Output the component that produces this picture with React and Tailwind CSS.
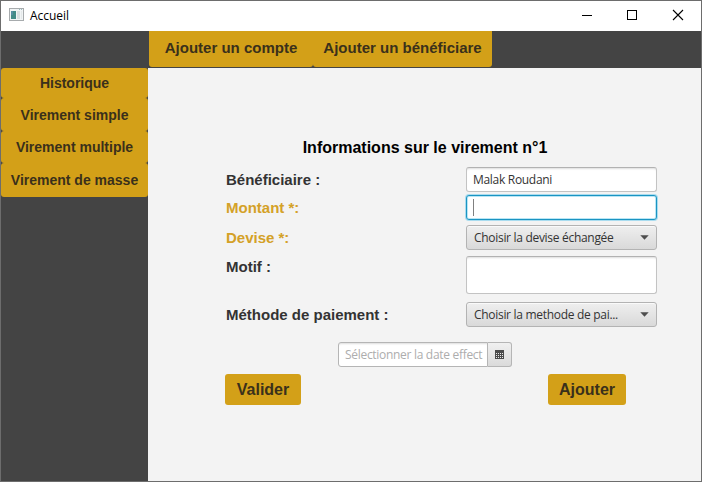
const SIDE_ITEMS = [
  { label: 'Historique', height: 'h-[30px]' },
  { label: 'Virement simple', height: 'h-[33px] pt-px' },
  { label: 'Virement multiple', height: 'h-[32px]' },
  { label: 'Virement de masse', height: 'h-[34px]' },
];

function AppIcon() {
  return (
    <svg className="-mt-[3px]" width="15" height="13" viewBox="0 0 15 13" shapeRendering="crispEdges">
      <rect width="15" height="13" fill="#a7abad" />
      <rect x="1" y="1" width="13" height="11" fill="#f1f4f5" />
      <rect x="2" y="3" width="5" height="8" fill="#438b87" />
      <rect x="2" y="3" width="2" height="4" fill="#578fa3" />
      <rect x="8" y="3" width="3" height="8" fill="#d9dee0" />
      <rect x="12" y="3" width="1" height="8" fill="#e4e8e9" />
      <rect x="10" y="1" width="1" height="1" fill="#9dbdc0" />
      <rect x="12" y="1" width="1" height="1" fill="#9dbdc0" />
    </svg>
  );
}

function TitleBar() {
  return (
    <div className="flex h-[30px] shrink-0 items-center bg-white pl-2 text-black">
      <AppIcon />
      <span className="ml-[6px] flex-1 font-['Open_Sans','Noto_Sans',sans-serif] text-[12px] leading-4 tracking-[-0.05px]">
        Accueil
      </span>
      <svg width="46" height="30" viewBox="0 0 46 30" shapeRendering="crispEdges">
        <path d="M19 14.5H29" stroke="currentColor" />
      </svg>
      <svg width="46" height="30" viewBox="0 0 46 30" shapeRendering="crispEdges">
        <rect x="18.5" y="9.5" width="9" height="9" fill="none" stroke="currentColor" />
      </svg>
      <svg width="46" height="30" viewBox="0 0 46 30">
        <path d="M18 9L28 19M28 9L18 19" stroke="currentColor" strokeWidth="1.1" />
      </svg>
    </div>
  );
}

function Field({ children, focused }) {
  return (
    <div
      className={
        focused
          ? 'flex h-[25px] w-[191px] items-center rounded-[3px] border border-[#1a94c2] bg-white px-[5px] shadow-[0_0_0_1px_#a9dcef,inset_0_0_0_1px_#b9e6f5]'
          : 'flex h-[25px] w-[191px] items-center rounded-[3px] border border-[#c3c3c3] border-t-[#b2b2b2] bg-white px-[6px] pt-px shadow-[inset_0_2px_2px_-1px_#dedede]'
      }
    >
      {children}
    </div>
  );
}

function Select({ children }) {
  return (
    <div className="flex h-[25px] w-[191px] items-center justify-between rounded-[3px] border border-[#b3b3b3] bg-linear-to-b from-[#efefef] to-[#d9d9d9] pr-[7px] pl-[7px] shadow-[inset_0_1px_0_#fafafa]">
      <span className="pt-px">{children}</span>
      <svg width="9" height="5" viewBox="0 0 9 5">
        <path d="M0.3 0.3H8.7L4.5 4.7Z" fill="#4d4d4d" />
      </svg>
    </div>
  );
}

function Row({ label, required, lineHeight = 'leading-[25px]', className, children }) {
  return (
    <div className={`flex w-[431px] items-start justify-between ${className}`}>
      <span
        className={`font-['Liberation_Sans',Arial,sans-serif] text-[15px] font-bold tracking-normal ${lineHeight} ${
          required ? 'text-[#d4a127]' : 'text-[#333333]'
        }`}
      >
        {label}
      </span>
      {children}
    </div>
  );
}

function CalendarIcon() {
  return (
    <svg width="9" height="9" viewBox="0 0 9 9" shapeRendering="crispEdges">
      <rect width="9" height="9" fill="#4a4a4a" />
      {[3, 5, 7].map((y) =>
        [1, 3, 5, 7].map((x) => (
          <rect key={`${x}-${y}`} x={x} y={y} width="1" height="1" fill="#e8e8e8" />
        ))
      )}
    </svg>
  );
}

const actionClass =
  'h-[31px] rounded-[3px] bg-[#d3a018] text-[16px] font-bold leading-[31px] text-[#3a301b]';

export default function App() {
  return (
    <div className="flex h-[482px] w-[702px] flex-col overflow-hidden border border-[#6d6d6d] bg-[#f3f3f3] font-['Liberation_Sans',Arial,sans-serif]">
      <TitleBar />
      <header className="flex h-[37px] shrink-0 items-start bg-[#444444] pl-[148px] text-[15px] font-bold text-[#3a301b]">
        <button className="h-9 w-[164px] rounded-b-[3px] bg-[#d3a018] pb-[2px]">Ajouter un compte</button>
        <button className="h-9 w-[179px] rounded-b-[3px] bg-[#d3a018] pb-[2px]">Ajouter un bénéficiare</button>
      </header>
      <div className="flex min-h-0 flex-1">
        <nav className="flex w-[147px] shrink-0 flex-col bg-[#444444] text-[14px] font-bold text-[#3a301b]">
          {SIDE_ITEMS.map((item) => (
            <button
              key={item.label}
              className={`${item.height} shrink-0 rounded-[3px] bg-[#d3a018] whitespace-nowrap`}
            >
              {item.label}
            </button>
          ))}
        </nav>
        <main className="flex-1 pt-[70px] pl-[78px] font-['Open_Sans','Noto_Sans',sans-serif] text-[12px] leading-4 tracking-[-0.3px] text-[#333333]">
          <h1 className="w-[398px] text-center font-['Liberation_Sans',Arial,sans-serif] text-[16px] leading-5 font-bold tracking-normal text-black">
            Informations sur le virement n°1
          </h1>
          <Row label="Bénéficiaire :" className="mt-[9px]">
            <Field>Malak Roudani</Field>
          </Row>
          <Row label="Montant *:" required className="mt-[3px]">
            <Field focused>
              <span className="ml-[1px] h-[17px] w-px bg-[#808080]" />
            </Field>
          </Row>
          <Row label="Devise *:" required className="mt-[5px]">
            <Select>Choisir la devise échangée</Select>
          </Row>
          <Row label="Motif :" lineHeight="leading-[21px]" className="mt-[6px]">
            <div className="h-[38px] w-[191px] rounded-[3px] border border-[#c3c3c3] border-t-[#b2b2b2] bg-white shadow-[inset_0_2px_2px_-1px_#dedede]" />
          </Row>
          <Row label="Méthode de paiement :" className="mt-[8px]">
            <Select>Choisir la methode de pai...</Select>
          </Row>
          <div className="mt-[15px] ml-[112px] flex h-[25px] w-[174px]">
            <div className="flex w-[150px] items-center rounded-l-[3px] border border-[#b5b5b5] bg-white px-[6px] pt-px text-[#adadad] shadow-[inset_0_2px_2px_-1px_#dedede]">
              <span className="whitespace-nowrap">Sélectionner la date effect</span>
            </div>
            <div className="flex flex-1 items-center justify-center rounded-r-[3px] border border-l-0 border-[#b5b5b5] bg-linear-to-b from-[#f0f0f0] to-[#dadada]">
              <CalendarIcon />
            </div>
          </div>
          <div className="-ml-px mt-[7px] flex w-[401px] justify-between font-['Liberation_Sans',Arial,sans-serif] tracking-normal">
            <button className={`w-[76px] ${actionClass}`}>Valider</button>
            <button className={`w-[78px] ${actionClass}`}>Ajouter</button>
          </div>
        </main>
      </div>
    </div>
  );
}
